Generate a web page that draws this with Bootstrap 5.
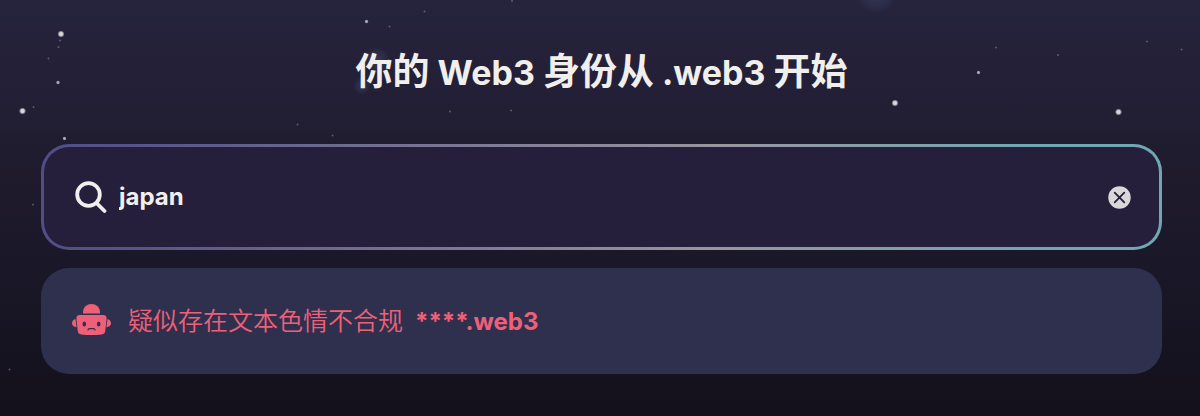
<!DOCTYPE html>
<html lang="zh-CN">
<head>
<meta charset="utf-8">
<meta name="viewport" content="width=device-width, initial-scale=1">
<title>.web3</title>
<link href="https://cdn.jsdelivr.net/npm/bootstrap@5.3.0/dist/css/bootstrap.min.css" rel="stylesheet">
<style>
  body {
    font-family: Inter, "Noto Sans CJK SC", sans-serif;
    color: #f0efec;
    background: #14111c;
  }
  .night {
    min-height: 100vh;
    background: linear-gradient(#26233d 0%, #231f36 22%, #1f1b2d 42%, #1a1728 65%, #15121e 92%, #14111c 100%);
  }
  .stars { z-index: 0; pointer-events: none; }
  .page-inner { z-index: 1; padding: 45px 38px 40px 41px; }
  .hero-title { font-size: 34px; line-height: 54px; margin-bottom: 44px; }
  .hero-title span { font-size: 37px; }
  .search-box, .result-box { min-height: 106px; border-radius: 28px; }
  .search-box {
    border: 3px solid transparent;
    padding: 0 28px 0 31px;
    margin-bottom: 18px;
    background:
      linear-gradient(#251f3b, #251f3b) padding-box,
      linear-gradient(95deg, #514d86 0%, #58558b 10%, #99969e 60%, #70a7b2 88%, #70a7b2 100%) border-box;
  }
  .search-input, .search-input:focus {
    color: #f0efec;
    font-size: 24px;
    line-height: 36px;
    background: transparent;
    box-shadow: none;
  }
  .result-box {
    padding: 0 32px 0 31px;
    gap: 17px;
    color: #ef6078;
    background: #2f304e;
    font-size: 25px;
    line-height: 36px;
  }
  .result-reason { font-weight: 350; }
  .result-name { color: inherit; font-size: 24px; margin-left: 12px; }
</style>
</head>
<body>
<main class="night position-relative overflow-hidden">
  <svg class="stars position-absolute top-0 start-0 w-100 h-100" viewBox="0 0 1200 416" preserveAspectRatio="xMidYMin slice" aria-hidden="true">
    <defs>
      <radialGradient id="glow"><stop offset="0" stop-color="#3b4564" stop-opacity=".9"/><stop offset=".6" stop-color="#35405f" stop-opacity=".6"/><stop offset="1" stop-color="#35405f" stop-opacity="0"/></radialGradient>
      <radialGradient id="star"><stop offset="0" stop-color="#e6e4e8"/><stop offset=".5" stop-color="#c9c7cf"/><stop offset="1" stop-color="#c9c7cf" stop-opacity="0"/></radialGradient>
    </defs>
    <g fill="url(#glow)">
      <circle cx="876" cy="-8" r="22" opacity=".7"/>
      <circle cx="377" cy="60" r="13" opacity=".7"/>
      <circle cx="362" cy="86" r="9" opacity=".6"/>
    </g>
    <g fill="url(#star)">
      <circle cx="61" cy="34" r="3.600"/><circle cx="22.500" cy="111" r="3.600"/>
      <circle cx="895" cy="103" r="3.600"/><circle cx="1118.500" cy="112" r="3.600"/>
      <g opacity=".75">
        <circle cx="366.500" cy="21.500" r="2.200"/><circle cx="58" cy="82.500" r="2.200"/>
        <circle cx="64.500" cy="138.500" r="2.200"/><circle cx="978.500" cy="72.500" r="2.200"/>
      </g>
    </g>
    <g fill="#a5a2b5" opacity=".45">
      <circle cx="60" cy="40.500" r="1"/><circle cx="58.500" cy="47" r="1"/><circle cx="48.500" cy="58.500" r="1"/>
      <circle cx="33.500" cy="107" r="1"/><circle cx="389.500" cy="26.500" r="1"/><circle cx="424.500" cy="11.500" r="1"/>
      <circle cx="512" cy="1" r="1"/><circle cx="297.500" cy="124.500" r="1"/><circle cx="332.500" cy="135.500" r="1"/>
      <circle cx="450" cy="111.500" r="1"/><circle cx="511" cy="110.500" r="1"/><circle cx="996" cy="47.500" r="1"/>
      <circle cx="1058" cy="55" r="1"/><circle cx="1147" cy="41.500" r="1"/><circle cx="1181.500" cy="49.500" r="1"/>
      <circle cx="33" cy="204.500" r="1"/><circle cx="9.500" cy="369.500" r="1"/>
    </g>
  </svg>

  <div class="page-inner position-relative">
    <h1 class="hero-title fw-bold text-center"><span>你的</span> Web3 <span>身份从</span> .web3 <span>开始</span></h1>

    <form class="search-box d-flex align-items-center" role="search">
      <label for="domain" class="d-flex flex-shrink-0" aria-label="搜索">
        <svg width="32" height="34" viewBox="0 0 32 34" fill="none" stroke="#f0efec" stroke-width="3.800" stroke-linecap="round">
          <circle cx="13.500" cy="14.500" r="11.300"/><path d="M22 23.500 29.500 31"/>
        </svg>
      </label>
      <input id="domain" class="search-input form-control border-0 rounded-0 fw-bold py-0 ps-2 ms-1 pe-3" type="text" value="japan" autocomplete="off" spellcheck="false">
      <button type="reset" class="btn border-0 p-0 d-flex flex-shrink-0" aria-label="清除">
        <svg width="23" height="23" viewBox="0 0 23 23">
          <circle cx="11.500" cy="11.500" r="11.200" fill="#d9d8d9"/>
          <path d="m6.700 6.700 9.600 9.600m0-9.600-9.600 9.600" fill="none" stroke="#251f3b" stroke-width="1.800" stroke-linecap="round"/>
        </svg>
      </button>
    </form>

    <section class="result-box d-flex align-items-center">
      <svg class="flex-shrink-0" width="39" height="36" viewBox="0 0 39 36" fill="#ef6078" aria-hidden="true">
        <path d="M11 10.500V9a8.500 8 0 0 1 17 0v1.500z"/>
        <path d="M8 12h23q4 0 3.600 3.800l-1.300 12q-.4 3.400-3.600 3.700-10.200 1-20.400 0-3.200-.3-3.600-3.700l-1.300-12Q4 12 8 12z"/>
        <path d="M3.500 16.200 4.600 24.200C1.800 24 0 22.500 0 20.200s1.500-4 3.500-4zM35.500 16.200l-1.100 8c2.800-.2 4.600-1.700 4.600-4s-1.500-4-3.500-4z"/>
        <g fill="#2f304e"><ellipse cx="12.300" cy="21" rx="1.800" ry="2.600"/><ellipse cx="26.700" cy="21" rx="1.800" ry="2.600"/></g>
        <path d="M16 26.800q.2-1.200 1.400-1.200h4.200q1.200 0 1.400 1.200" fill="none" stroke="#2f304e" stroke-width="1.300" stroke-linecap="round"/>
      </svg>
      <div><span class="result-reason">疑似存在文本色情不合规</span><strong class="result-name">****.web3</strong></div>
    </section>
  </div>
</main>
<script src="https://cdn.jsdelivr.net/npm/bootstrap@5.3.0/dist/js/bootstrap.bundle.min.js"></script>
</body>
</html>
